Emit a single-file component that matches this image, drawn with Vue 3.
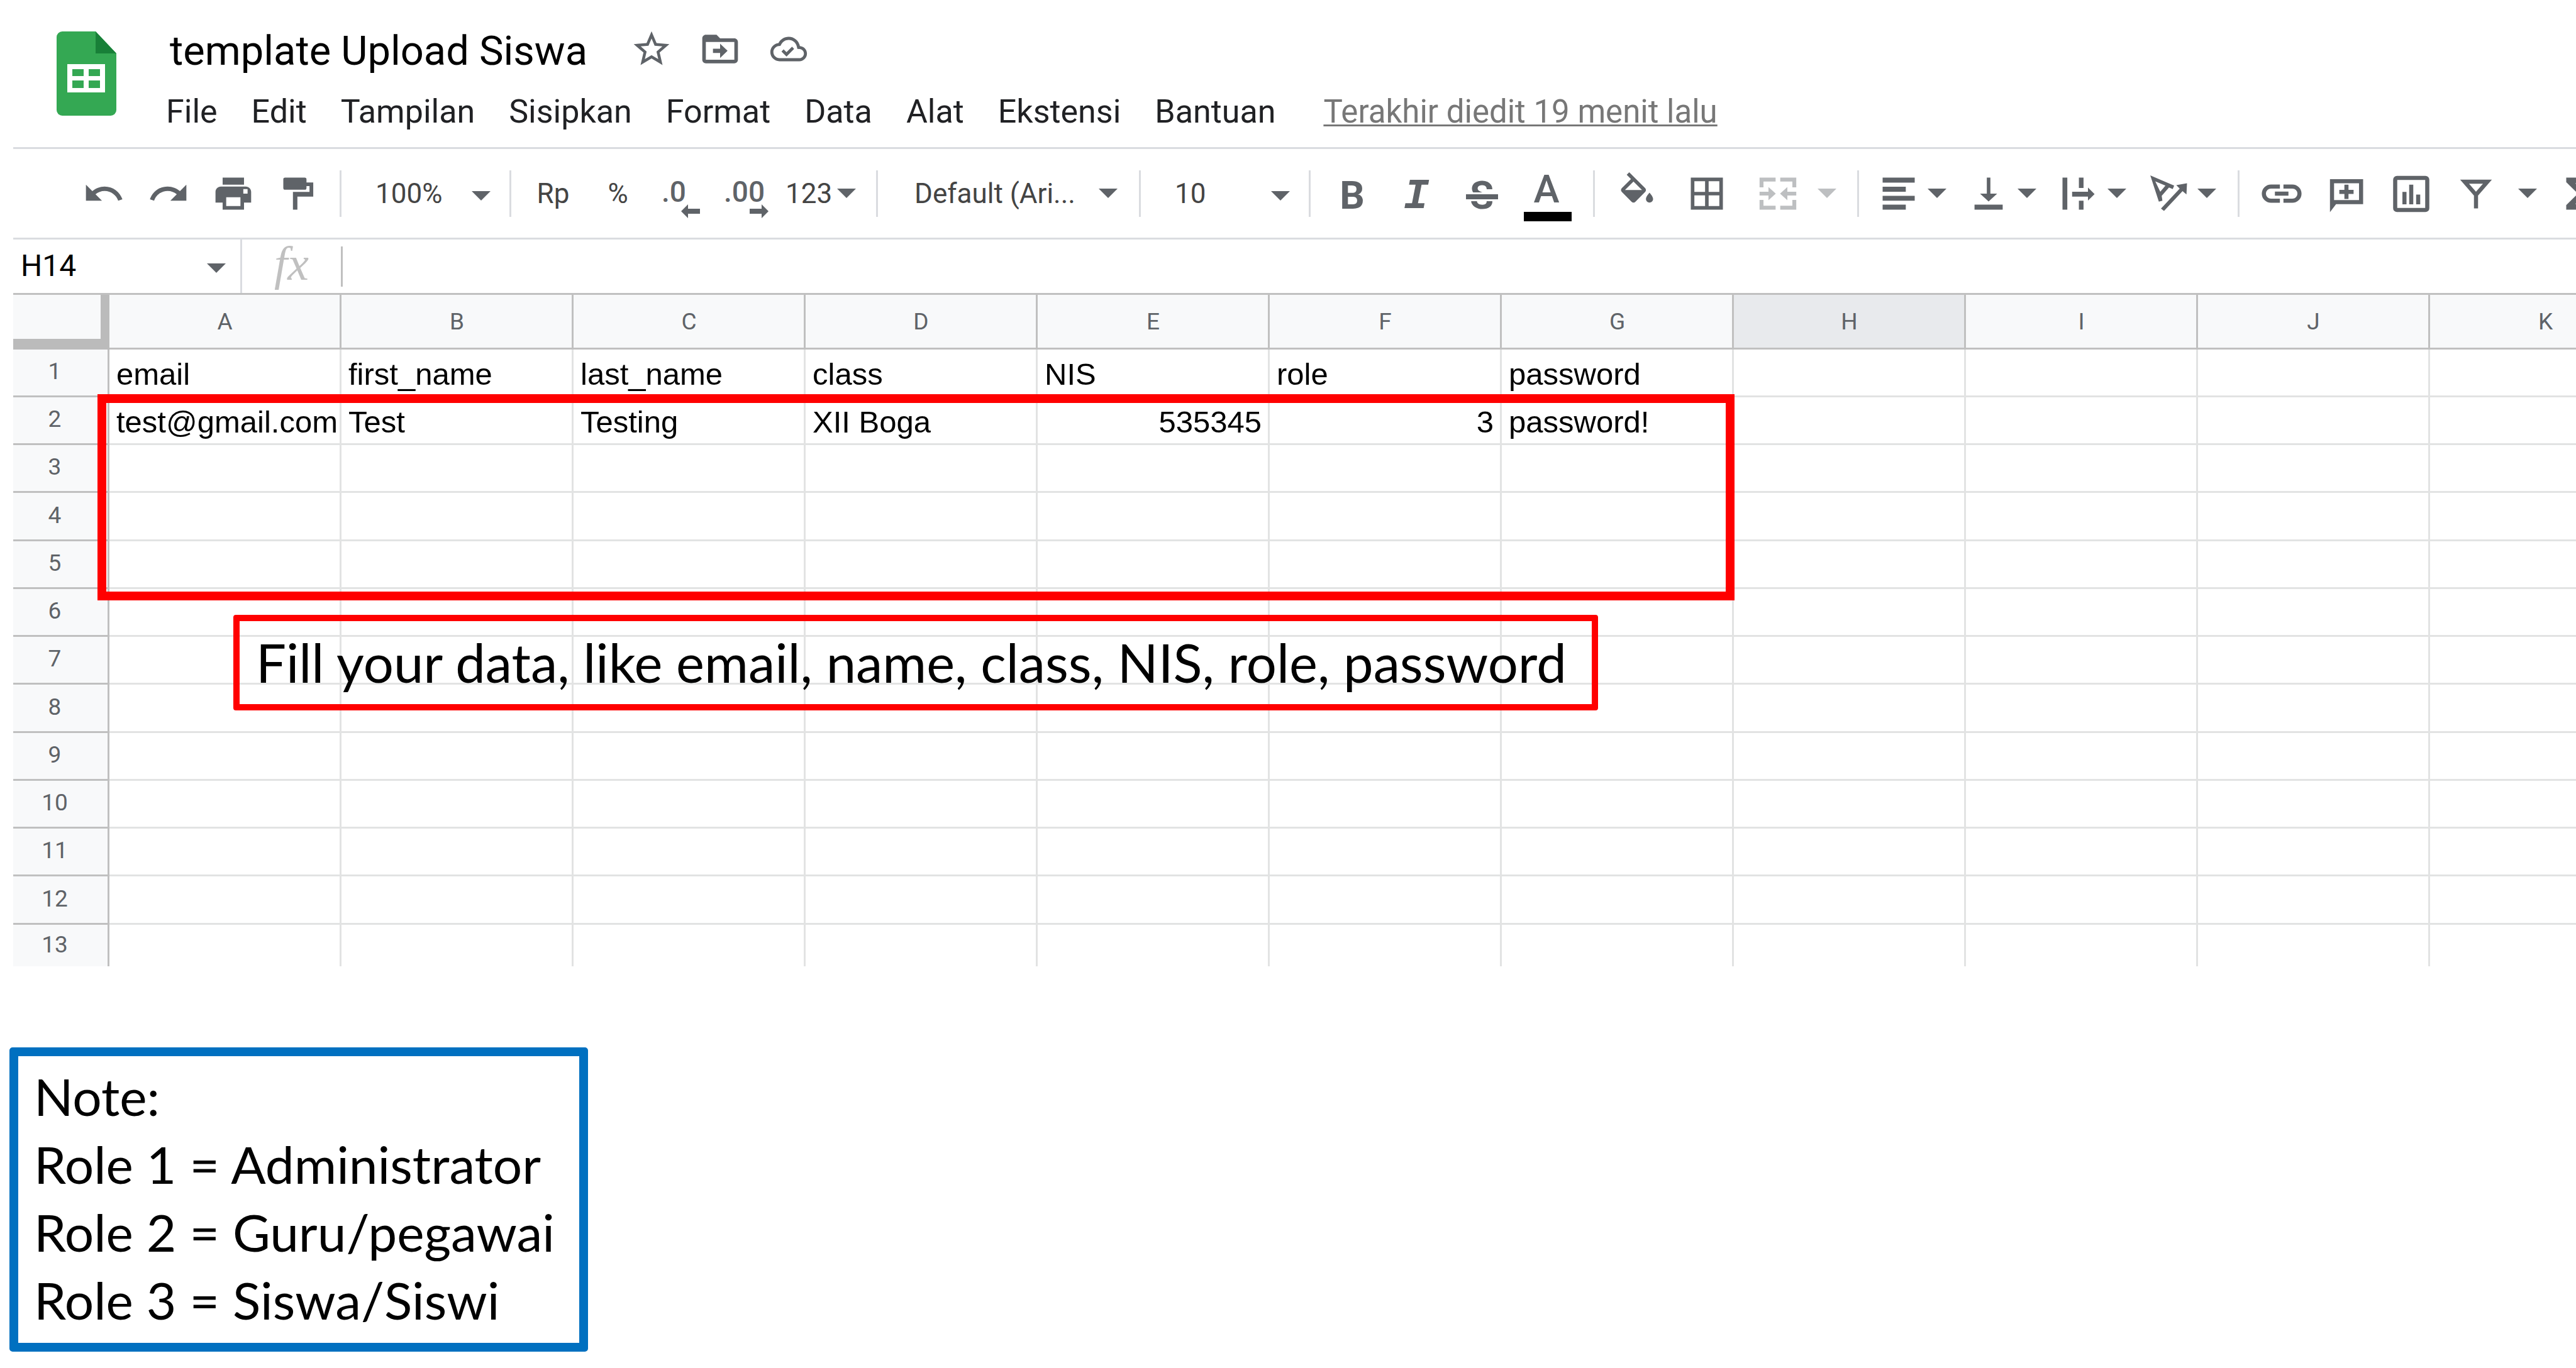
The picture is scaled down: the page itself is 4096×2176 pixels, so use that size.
<script setup>
import { ref } from 'vue'

const menus = ['File', 'Edit', 'Tampilan', 'Sisipkan', 'Format', 'Data', 'Alat', 'Ekstensi', 'Bantuan']
const columns = ['A', 'B', 'C', 'D', 'E', 'F', 'G', 'H', 'I', 'J', 'K']
const selectedColumn = 'H'

const filled = [
  ['email', 'first_name', 'last_name', 'class', 'NIS', 'role', 'password'],
  ['test@gmail.com', 'Test', 'Testing', 'XII Boga', 535345, 3, 'password!'],
]
const rows = Array.from({ length: 13 }, (_, r) => columns.map((_, c) => filled[r]?.[c] ?? ''))

const notes = ['Role 1 = Administrator', 'Role 2 = Guru/pegawai', 'Role 3 = Siswa/Siswi']

const cellName = ref('H14')
const formula = ref('')

const history = [
  { label: 'Urungkan', d: 'M12.5 8c-2.65 0-5.05.99-6.9 2.6L2 7v9h9l-3.62-3.62c1.39-1.16 3.16-1.88 5.12-1.88 3.54 0 6.55 2.31 7.6 5.5l2.37-.78C21.08 11.03 17.15 8 12.5 8z' },
  { label: 'Ulangi', d: 'M18.4 10.6C16.55 8.99 14.15 8 11.5 8c-4.65 0-8.58 3.03-9.96 7.22L3.9 16c1.05-3.19 4.05-5.5 7.6-5.5 1.95 0 3.73.72 5.12 1.88L13 16h9V7l-3.6 3.6z' },
  { label: 'Cetak', d: 'M19 8H5c-1.66 0-3 1.34-3 3v6h4v4h12v-4h4v-6c0-1.66-1.34-3-3-3zm-3 11H8v-5h8v5zm4-7h-2.4v-2.6H20V12zM18 3H6v4h12V3z' },
  { label: 'Salin format', d: 'M4.7 3h11a1 1 0 0 1 1 1v1.7h3.8v8h-8.9V21H9.1V11h9.3V7.8h-1.7v1a1 1 0 0 1-1 1h-11a1 1 0 0 1-1-1V4a1 1 0 0 1 1-1z' },
]
const cellTools = [
  { label: 'Warna isian', d: 'M16.56 8.94L7.62 0 6.21 1.41l2.38 2.38-5.15 5.15c-.59.59-.59 1.54 0 2.12l5.5 5.5c.29.29.68.44 1.06.44s.77-.15 1.06-.44l5.5-5.5c.59-.58.59-1.53 0-2.12zM5.21 10L10 5.21 14.79 10H5.21zM19 11.5s-2 2.17-2 3.5c0 1.1.9 2 2 2s2-.9 2-2c0-1.33-2-3.5-2-3.5z' },
  { label: 'Batas', d: 'M3 3v18h18V3H3zm8 16H5v-6h6v6zm0-8H5V5h6v6zm8 8h-6v-6h6v6zm0-8h-6V5h6v6z' },
]
const alignTools = [
  { label: 'Perataan horizontal', d: 'M3 3h18v2.8H3zM3 8.1h13v2.8H3zM3 13.2h18V16H3zM3 18.2h13V21H3z' },
  { label: 'Perataan vertikal', d: 'M4.1 18.2h15.8V21H4.1zM11 3h2v9h3.8L12 16.4 7.2 12H11z' },
  { label: 'Pembungkusan teks', d: 'M3 3h2.7v18H3zM12.2 3h2.6v5.8h-2.6zM12.2 16h2.6v5h-2.6zM8.4 10.9h8.9V8.6L21 12.3l-3.7 3.6v-2.2H8.4z' },
  { label: 'Rotasi teks', d: 'M1.8 1.8 15.2 7.5 14.4 9.4 12.3 8.6 8.2 13.2 8.6 16 6.6 16.5zM4.6 5.1 7.4 10.9 10.3 7.5zM7.8 20.4 18.3 9.2 16.4 7.2 22.4 6.2 22.1 12.4 19.9 10.6 9.5 21.7z' },
]
</script>

<template>
  <div class="page">
    <header class="doc">
      <svg class="logo" viewBox="0 0 95 134" aria-label="Spreadsheet" role="img">
        <path d="M9 0h53l33 35v90a9 9 0 0 1-9 9H9a9 9 0 0 1-9-9V9a9 9 0 0 1 9-9z" fill="#34a853" />
        <path d="M62 0l33 35H62z" fill="#188038" />
        <path d="M17 52h60v45H17zM25 60v11h18V60zm26 0v11h18V60zM25 78v12h18V78zm26 0v12h18V78z" fill="#fff" fill-rule="evenodd" />
      </svg>
      <div class="doc-main">
        <div class="title-row">
          <h1 class="title">template Upload Siswa</h1>
          <div class="title-actions">
            <button class="plain" aria-label="Beri bintang">
              <svg class="icon" viewBox="0 0 24 24"><path d="M22 9.24l-7.19-.62L12 2 9.19 8.63 2 9.24l5.46 4.73L5.82 21 12 17.27 18.18 21l-1.63-7.03L22 9.24zM12 15.4l-3.76 2.27 1-4.28-3.32-2.88 4.38-.38L12 6.1l1.71 4.04 4.38.38-3.32 2.88 1 4.28L12 15.4z" /></svg>
            </button>
            <button class="plain" aria-label="Pindahkan">
              <svg class="icon" viewBox="0 0 24 24"><path d="M20 6h-8l-2-2H4c-1.1 0-2 .9-2 2v12c0 1.1.9 2 2 2h16c1.1 0 2-.9 2-2V8c0-1.1-.9-2-2-2zm0 12H4V8h16v10zM12 17l4.2-4L12 9v2.8H8v2.4h4z" /></svg>
            </button>
            <button class="plain" aria-label="Status dokumen">
              <svg class="icon" viewBox="-2 -2 28 28"><path d="M19.35 10.04C18.67 6.59 15.64 4 12 4 9.11 4 6.6 5.64 5.35 8.04 2.34 8.36 0 10.91 0 14c0 3.31 2.69 6 6 6h13c2.76 0 5-2.24 5-5 0-2.64-2.05-4.78-4.65-4.96zM19 18H6c-2.21 0-4-1.79-4-4 0-2.05 1.53-3.76 3.56-3.97l1.07-.11.5-.95C8.08 7.14 9.94 6 12 6c2.62 0 4.88 1.86 5.39 4.43l.3 1.5 1.53.11c1.56.1 2.78 1.41 2.78 2.96 0 1.65-1.35 3-3 3zm-8.4-3.9l-1.9-1.9L7.3 13.6l3.3 3.3 5-5-1.4-1.4z" /></svg>
            </button>
          </div>
        </div>
        <nav class="menu">
          <button v-for="m in menus" :key="m" class="plain menu-item">{{ m }}</button>
          <a class="last-edit" href="#">Terakhir diedit 19 menit lalu</a>
        </nav>
      </div>
    </header>

    <div class="toolbar" role="toolbar" aria-label="Format">
      <button v-for="t in history" :key="t.label" class="tool" :aria-label="t.label">
        <svg class="icon" viewBox="0 0 24 24"><path fill-rule="evenodd" :d="t.d" /></svg>
      </button>
      <span class="sep"></span>
      <label class="pick">
        <select aria-label="Zoom"><option>100%</option></select>
        <svg class="caret" viewBox="0 0 30 15"><path d="M0 0h30L15 15z" /></svg>
      </label>
      <span class="sep"></span>
      <button class="tool">Rp</button>
      <button class="tool">%</button>
      <button class="tool" aria-label="Kurangi desimal">
        <svg class="icon" viewBox="0 0 68 68">
          <text class="digits" x="0" y="47">.0</text>
          <path d="M31 62l11-11v7h19v8H42v7z" />
        </svg>
      </button>
      <button class="tool" aria-label="Tambah desimal">
        <svg class="icon" viewBox="0 0 68 68">
          <text class="digits" x="-4" y="47">.00</text>
          <path d="M67 62L56 51v7H37v8h19v7z" />
        </svg>
      </button>
      <button class="tool more">123<svg class="caret" viewBox="0 0 30 15"><path d="M0 0h30L15 15z" /></svg></button>
      <span class="sep"></span>
      <label class="pick wide">
        <select aria-label="Font"><option>Default (Ari...</option></select>
        <svg class="caret" viewBox="0 0 30 15"><path d="M0 0h30L15 15z" /></svg>
      </label>
      <span class="sep"></span>
      <label class="pick">
        <select aria-label="Ukuran font"><option>10</option></select>
        <svg class="caret" viewBox="0 0 30 15"><path d="M0 0h30L15 15z" /></svg>
      </label>
      <span class="sep"></span>
      <button class="tool" aria-label="Tebal">
        <svg class="icon" viewBox="0 0 68 68"><text class="glyph bold" x="33" y="58">B</text></svg>
      </button>
      <button class="tool" aria-label="Miring">
        <svg class="icon" viewBox="0 0 68 68"><text class="glyph slanted" x="32" y="57">I</text></svg>
      </button>
      <button class="tool" aria-label="Coret">
        <svg class="icon" viewBox="0 0 68 68">
          <text class="glyph strong" x="33" y="58">S</text>
          <path d="M8 32h51v14H8z" fill="#fff" />
          <path d="M8 35h51v8H8z" />
        </svg>
      </button>
      <button class="tool color" aria-label="Warna teks">
        <svg class="icon" viewBox="0 0 68 68">
          <text class="glyph medium" x="33" y="48">A</text>
          <path d="M-3 63h76v15H-3z" fill="#000" />
        </svg>
      </button>
      <span class="sep"></span>
      <span class="cells">
        <button v-for="t in cellTools" :key="t.label" class="tool" :aria-label="t.label">
          <svg class="icon" viewBox="0 0 24 24"><path :d="t.d" /></svg>
        </button>
      </span>
      <button class="tool merge" aria-label="Gabungkan sel" disabled>
        <svg class="icon" viewBox="0 0 24 24"><path d="M1.7 3h9v2.2H3.9v3.3H1.7zM22.3 3h-9v2.2h6.8v3.3h2.2zM1.7 21h9v-2.2H3.9v-3.3H1.7zM22.3 21h-9v-2.2h6.8v-3.3h2.2zM1.7 10.9h5V8.3l4.1 3.7-4.1 3.7v-2.6h-5zM22.3 10.9h-5V8.3L13.2 12l4.1 3.7v-2.6h5z" /></svg>
        <svg class="caret" viewBox="0 0 30 15"><path d="M0 0h30L15 15z" /></svg>
      </button>
      <span class="sep"></span>
      <button v-for="t in alignTools" :key="t.label" class="tool pair" :aria-label="t.label">
        <svg class="icon" viewBox="0 0 24 24"><path fill-rule="evenodd" :d="t.d" /></svg>
        <svg class="caret" viewBox="0 0 30 15"><path d="M0 0h30L15 15z" /></svg>
      </button>
      <span class="sep"></span>
      <button class="tool" aria-label="Sisipkan link">
        <svg class="icon line" viewBox="0 0 24 24"><path d="M11 8H6a4 4 0 0 0 0 8h5M13 8h5a4 4 0 0 1 0 8h-5M8.2 12h7.6" /></svg>
      </button>
      <button class="tool" aria-label="Sisipkan komentar">
        <svg class="icon line" viewBox="0 0 24 24"><path d="M3.9 19V5h16.3v11.8H5.6L3.9 19zM12 7v8M8 11h8" /></svg>
      </button>
      <button class="tool" aria-label="Sisipkan diagram">
        <svg class="icon line" viewBox="0 0 24 24"><rect x="3" y="3.2" width="18" height="18" rx="1" /><path d="M8.2 11v7M12 7v11M15.9 12.5V18" /></svg>
      </button>
      <button class="tool" aria-label="Buat filter">
        <svg class="icon line" viewBox="0 0 24 24"><path d="M12 20.3v-7.6L5.6 5.3h12.8L12 12.7" /></svg>
      </button>
      <button class="tool alone" aria-label="Tampilan filter">
        <svg class="caret" viewBox="0 0 30 15"><path d="M0 0h30L15 15z" /></svg>
      </button>
      <button class="tool" aria-label="Fungsi">
        <svg class="icon" viewBox="0 0 24 24"><path d="M20 3H4.4v2.6L11 12l-6.6 6.4V21H20v-3.2H9.5L15 12 9.5 6.2H20z" /></svg>
      </button>
    </div>

    <div class="formula-bar">
      <label class="name-box">
        <input v-model="cellName" aria-label="Kotak nama" />
        <svg class="caret" viewBox="0 0 30 15"><path d="M0 0h30L15 15z" /></svg>
      </label>
      <label class="fx" for="formula">fx</label>
      <input id="formula" v-model="formula" class="formula" />
    </div>

    <main class="sheet">
      <div class="grid-clip">
        <table class="grid">
          <colgroup>
            <col class="col-index" />
            <col v-for="c in columns" :key="c" class="col-data" />
          </colgroup>
          <thead>
            <tr>
              <th class="corner"></th>
              <th v-for="c in columns" :key="c" scope="col" :class="{ active: c === selectedColumn }">{{ c }}</th>
            </tr>
          </thead>
          <tbody>
            <tr v-for="(row, r) in rows" :key="r">
              <th scope="row">{{ r + 1 }}</th>
              <td v-for="(value, c) in row" :key="c" :class="{ number: typeof value === 'number' }">{{ value }}</td>
            </tr>
          </tbody>
        </table>
      </div>
      <div class="highlight"></div>
      <p class="callout">Fill your data, like email, name, class, NIS, role, password</p>
    </main>

    <aside class="note">
      <p>Note:</p>
      <p v-for="n in notes" :key="n">{{ n }}</p>
    </aside>
  </div>
</template>

<style>
body {
  margin: 0;
  background: #fff;
}
</style>

<style scoped>
.page {
  overflow: hidden;
  padding-bottom: 26px;
  font-family: Roboto, sans-serif;
  color: #000;
}
.page * {
  box-sizing: border-box;
}
h1,
p {
  margin: 0;
}
button,
select,
input {
  margin: 0;
  padding: 0;
  border: 0;
  background: none;
  color: inherit;
  font: inherit;
  outline: 0;
}
svg {
  display: block;
  flex: none;
  fill: currentColor;
}
.icon {
  width: 68px;
  height: 68px;
  overflow: visible;
}
.line {
  fill: none;
  stroke: currentColor;
  stroke-width: 2.3;
}
.caret {
  width: 30px;
  height: 15px;
}

/* document header */
.doc {
  display: flex;
  align-items: flex-start;
  height: 237px;
  margin-left: 21px;
  padding-left: 69px;
  border-bottom: 3px solid #dadce0;
}
.logo {
  width: 95px;
  height: 134px;
  margin-top: 50px;
}
.doc-main {
  padding: 44px 0 0 79px;
}
.title-row {
  display: flex;
  align-items: center;
  gap: 68px;
  padding-left: 6px;
}
.title {
  font-size: 65px;
  font-weight: 400;
  line-height: 72px;
}
.title-actions {
  display: flex;
  gap: 41px;
  padding-bottom: 6px;
  color: #5f6368;
}
.menu {
  display: flex;
  gap: 54px;
  margin-top: 28px;
  font-size: 52px;
  line-height: 64px;
  white-space: nowrap;
  color: #202124;
}
.last-edit {
  margin-left: 22px;
  font-size: 51px;
  color: #777;
  text-decoration-thickness: 3px;
  text-underline-offset: 3px;
}

/* toolbar */
.toolbar {
  display: flex;
  align-items: center;
  height: 144px;
  margin-left: 21px;
  padding-left: 92px;
  border-bottom: 3px solid #dadce0;
  font-size: 44px;
  color: #444;
}
.tool {
  display: flex;
  flex: none;
  align-items: center;
  justify-content: center;
  width: 103px;
  height: 88px;
}
.tool .icon,
.caret {
  color: #5f6368;
}
.sep {
  flex: none;
  width: 3px;
  height: 74px;
  margin: 0 15px;
  background: #dadce0;
}
.pick {
  display: grid;
  flex: none;
  align-items: center;
  width: 267px;
  margin: 0 -15px;
}
.pick.wide {
  width: 415px;
}
.pick select {
  grid-area: 1 / 1;
  height: 88px;
  padding: 0 64px 0 54px;
  appearance: none;
}
.pick.wide select {
  padding-left: 58px;
}
.pick .caret {
  grid-area: 1 / 1;
  justify-self: end;
  margin: 8px 30px 0 0;
  pointer-events: none;
}
.pick.wide .caret {
  margin: 0 34px 0 0;
}
.more {
  justify-content: flex-start;
  gap: 8px;
  width: 138px;
  padding-left: 9px;
}
.color {
  margin-right: 7px;
}
.cells {
  display: flex;
  flex: none;
  gap: 8px;
}
.merge {
  justify-content: flex-start;
  gap: 29px;
  width: 173px;
  padding-left: 28px;
}
.merge .icon,
.merge .caret {
  color: #bdbfc1;
}
.pair {
  justify-content: flex-start;
  gap: 12px;
  width: 143px;
  padding-left: 14px;
}
.alone {
  width: 62px;
}
.digits {
  font-size: 46px;
  font-weight: 500;
}
.glyph {
  font-size: 62px;
  text-anchor: middle;
}
.medium {
  font-weight: 500;
}
.strong,
.bold {
  font-weight: 700;
}
.slanted {
  font-family: "Liberation Mono", monospace;
  font-size: 68px;
  font-style: italic;
  font-weight: 700;
}

/* formula bar */
.formula-bar {
  display: flex;
  align-items: center;
  height: 88px;
  margin-left: 21px;
  border-bottom: 3px solid #c0c0c0;
}
.name-box {
  display: flex;
  align-items: center;
  width: 364px;
  height: 100%;
  padding: 0 23px 2px 12px;
  border-right: 3px solid #dadce0;
  font-size: 48px;
}
.name-box input {
  flex: 1;
  min-width: 0;
}
.name-box .caret {
  margin-top: 8px;
}
.fx {
  width: 160px;
  height: 64px;
  border-right: 3px solid #c0c0c0;
  font: italic 76px/54px "Liberation Serif", serif;
  text-align: center;
  color: #c0c0c0;
}
.formula {
  flex: 1;
  min-width: 0;
  padding: 0 20px;
  font-size: 48px;
}

/* spreadsheet grid */
.sheet {
  position: relative;
  margin-left: 21px;
}
.grid-clip {
  overflow: hidden;
}
.grid {
  width: 4212px;
  border-spacing: 0;
  table-layout: fixed;
}
.col-index {
  width: 153px;
}
.col-data {
  width: 369px;
}
.grid th,
.grid td {
  padding: 0 10px 0 11px;
  border: solid #e2e3e3;
  border-width: 0 3px 3px 0;
}
.grid th {
  border-color: #c0c0c0;
  background: #f8f9fa;
  color: #5f6368;
  font-size: 37px;
  font-weight: 400;
}
.grid thead th {
  height: 87px;
}
.grid thead .active {
  background: #e8eaed;
}
.grid thead .corner {
  border-width: 0 14px 17px 0;
  border-color: #bbb;
}
.grid tbody tr {
  height: 76px;
}
.grid tbody tr:nth-child(4n) {
  height: 77px;
}
.grid tbody tr:last-child {
  height: 66px;
}
.grid tbody tr:last-child > * {
  border-bottom-width: 0;
}
.grid tbody th {
  padding: 0 28px 4px 10px;
}
.grid td {
  padding-top: 4px;
  font: 49px/66px "Liberation Sans", Arial, sans-serif;
  white-space: nowrap;
}
.grid .number {
  text-align: right;
}
.highlight {
  position: absolute;
  top: 158px;
  left: 134px;
  width: 2603px;
  height: 328px;
  border: 14px solid #f00;
}
.callout {
  position: absolute;
  top: 509px;
  left: 350px;
  width: 2170px;
  height: 152px;
  padding-left: 26px;
  border: 10px solid #f00;
  border-radius: 4px;
  font: 84px/130px Lato, sans-serif;
  font-size: 85px;
  white-space: nowrap;
}

/* role legend */
.note {
  width: 920px;
  margin: 129px 0 0 15px;
  padding: 9px 25px 15px;
  border: 14px solid #0070c0;
  border-radius: 5px;
  font: 82px/108px Lato, sans-serif;
  white-space: nowrap;
}
</style>
